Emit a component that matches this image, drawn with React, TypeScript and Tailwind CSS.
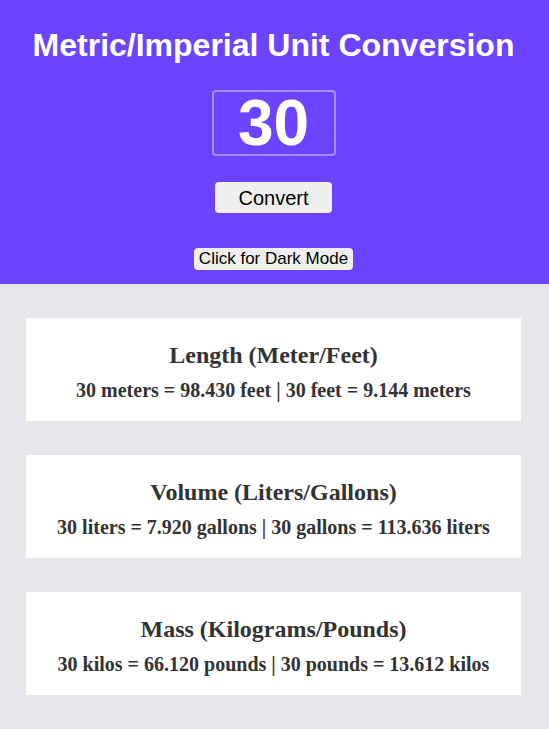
import React, { useState } from 'react';

interface Conversion {
  title: string;
  text: string;
}

const conversions: Conversion[] = [
  { title: 'Length (Meter/Feet)', text: '30 meters = 98.430 feet | 30 feet = 9.144 meters' },
  { title: 'Volume (Liters/Gallons)', text: '30 liters = 7.920 gallons | 30 gallons = 113.636 liters' },
  { title: 'Mass (Kilograms/Pounds)', text: '30 kilos = 66.120 pounds | 30 pounds = 13.612 kilos' },
];

const App: React.FC = () => {
  const [value, setValue] = useState('30');

  return (
    <div className="min-h-screen bg-[#e6e7eb] font-['Liberation_Sans',Arial,sans-serif]">
      <header className="bg-[#6c43ff] flex flex-col items-center pt-[27px] pb-[14px] pr-[2px]">
        <h1 className="text-white font-bold text-[32px] leading-[36px]">Metric/Imperial Unit Conversion</h1>
        <input
          className="mt-[27px] w-[124px] h-[66px] border-2 border-white/40 rounded-[4px] bg-transparent text-center text-white font-bold text-[64px] outline-none"
          value={value}
          onChange={(e) => setValue(e.target.value)}
        />
        <button className="mt-[26px] w-[117px] h-[31px] bg-[#efefef] rounded-[4px] text-[20px] text-black">
          Convert
        </button>
        <button className="mt-[35px] w-[159px] h-[22px] bg-[#efefef] rounded-[4px] text-[17px] leading-[22px] text-black">
          Click for Dark Mode
        </button>
      </header>

      <main className="flex flex-col gap-[34px] pt-[34px] pb-[33px] pl-[26px] pr-[28px]">
        {conversions.map((c) => (
          <div
            key={c.title}
            className="bg-white h-[103px] flex flex-col items-center pt-[23px] text-[#333] font-['Liberation_Serif','Times_New_Roman',serif] font-bold"
          >
            <h2 className="text-[24px] leading-[28px]">{c.title}</h2>
            <p className="text-[20px] leading-[23px] mt-[10px]">{c.text}</p>
          </div>
        ))}
      </main>
    </div>
  );
};

export default App;
